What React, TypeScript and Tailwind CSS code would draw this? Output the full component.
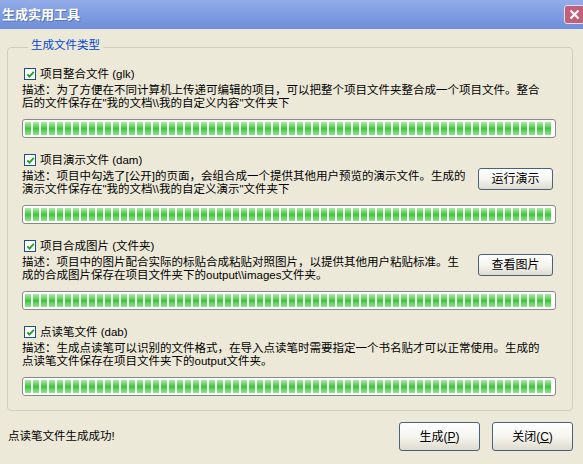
import { ReactNode } from "react";

const sections = [
  {
    label: "项目整合文件 (glk)",
    lines: [
      "描述：为了方便在不同计算机上传递可编辑的项目，可以把整个项目文件夹整合成一个项目文件。整合",
      "后的文件保存在\"我的文档\\\\我的自定义内容\"文件夹下",
    ],
  },
  {
    label: "项目演示文件 (dam)",
    lines: [
      "描述：项目中勾选了[公开]的页面，会组合成一个提供其他用户预览的演示文件。生成的",
      "演示文件保存在\"我的文档\\\\我的自定义演示\"文件夹下",
    ],
    button: "运行演示",
  },
  {
    label: "项目合成图片 (文件夹)",
    lines: [
      "描述：项目中的图片配合实际的标贴合成粘贴对照图片，以提供其他用户粘贴标准。生",
      "成的合成图片保存在项目文件夹下的output\\\\images文件夹。",
    ],
    button: "查看图片",
  },
  {
    label: "点读笔文件 (dab)",
    lines: [
      "描述：生成点读笔可以识别的文件格式，在导入点读笔时需要指定一个书名贴才可以正常使用。生成的",
      "点读笔文件保存在项目文件夹下的output文件夹。",
    ],
  },
];

const CheckBox = () => (
  <span className="flex h-[12px] w-[12px] shrink-0 items-center justify-center border border-[#1c5180] bg-white">
    <svg width="9" height="9" viewBox="0 0 9 9">
      <path d="M1.3 4.3 L3.4 6.6 L7.8 1.8" fill="none" stroke="#21a121" strokeWidth="1.8" />
    </svg>
  </span>
);

const ProgressBar = () => (
  <div className="h-[19px] rounded-[3px] border border-[#8a8a8a] bg-white p-[2px]">
    <div className="flex h-full gap-[2px] overflow-hidden">
      {Array.from({ length: 66 }).map((_, i) => (
        <div
          key={i}
          className="h-full w-[6px] shrink-0 bg-gradient-to-b from-[#a9eca5] via-[#34c934] to-[#8fe28b]"
        />
      ))}
    </div>
  </div>
);

const XpButton = ({ children, className }: { children: ReactNode; className: string }) => (
  <button className={`rounded-[3px] border border-[#48617e] bg-gradient-to-b from-white via-[#f6f5f0] to-[#dedbce] text-[12px] text-black ${className}`}>
    {children}
  </button>
);

export default function App() {
  return (
    <div className="flex h-[464px] w-[583px] flex-col overflow-hidden bg-[#ece9d8] font-['Liberation_Sans','Noto_Sans_CJK_SC',sans-serif] text-black">
      {/* title bar */}
      <div className="flex h-[29px] items-center justify-between bg-gradient-to-b from-[#93ade9] via-[#7e9ce2] to-[#6f8ed9] pl-[2px]">
        <span className="text-[13px] font-bold text-white [text-shadow:1px_1px_0_#5a72b8]">生成实用工具</span>
        <span className="mr-[-2px] mt-[-1px] flex h-[19px] w-[21px] items-center justify-center rounded-[3px] border border-[#e8dce8] bg-[#c0607a]">
          <svg width="11" height="11" viewBox="0 0 11 11">
            <path d="M1.5 1.5 L9.5 9.5 M9.5 1.5 L1.5 9.5" stroke="white" strokeWidth="2.2" />
          </svg>
        </span>
      </div>

      <div className="flex flex-1 flex-col pt-[8px]">
        <fieldset className="ml-[7px] w-[566px] rounded-[4px] border border-[#d0d0bf] pb-[14px] pl-[14px] pr-[16px]">
          <legend className="ml-[6px] h-[20px] px-[3px] text-[11.5px] leading-[16px] text-[#0046d5]">生成文件类型</legend>
          <div className="flex flex-col gap-[15px] pt-[10px]">
            {sections.map((s) => (
              <div key={s.label} className="flex flex-col">
                <div className="ml-[2px] flex h-[14px] items-center gap-[4px]">
                  <CheckBox />
                  <span className="text-[11.5px] leading-[14px]">{s.label}</span>
                </div>
                <div className="mt-[3px] flex items-start justify-between">
                  <div className="whitespace-nowrap text-[11.5px] leading-[13px]">
                    {s.lines.map((l) => (
                      <div key={l}>{l}</div>
                    ))}
                  </div>
                  {s.button && (
                    <XpButton className="mr-[3px] mt-[-2px] h-[22px] w-[75px]">{s.button}</XpButton>
                  )}
                </div>
                <div className="mt-[9px]">
                  <ProgressBar />
                </div>
              </div>
            ))}
          </div>
        </fieldset>

        <div className="mt-[11px] flex items-center justify-between pl-[8px] pr-[10px]">
          <span className="text-[11.5px]">点读笔文件生成成功!</span>
          <div className="flex gap-[12px]">
            <XpButton className="h-[29px] w-[81px]">
              生成(<span className="underline">P</span>)
            </XpButton>
            <XpButton className="h-[29px] w-[81px]">
              关闭(<span className="underline">C</span>)
            </XpButton>
          </div>
        </div>
      </div>
    </div>
  );
}
